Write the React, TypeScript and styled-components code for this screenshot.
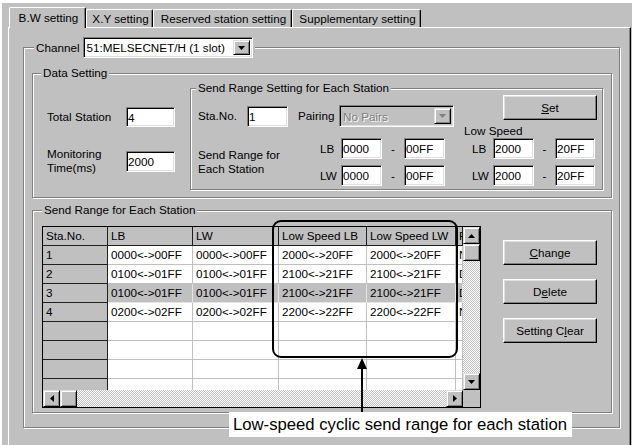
import styled, { createGlobalStyle } from 'styled-components';

const FACE = '#c0c0c0';
const SHADOW = '#808080';
const LIGHT = '#dfdfdf';

const GlobalStyle = createGlobalStyle`
  * { box-sizing: border-box; }
  html, body { margin: 0; padding: 0; background: #fff; }
  body {
    font-family: "Liberation Sans", Arial, sans-serif;
    font-size: 11.7px;
    color: #000;
  }
`;

const Dialog = styled.div`
  position: relative;
  width: 630px;
  height: 442px;
  margin: 3px 0 0 2px;
  padding-top: 4px;
  background: ${FACE};
  overflow: hidden;
  display: flex;
  flex-direction: column;
`;

const TabStrip = styled.div`
  display: flex;
  align-items: flex-end;
  height: 20px;
  margin-left: 7px;
`;

const Tab = styled.div<{ $w: number; $active?: boolean }>`
  position: relative;
  z-index: ${p => (p.$active ? 1 : 0)};
  width: ${p => p.$w}px;
  height: ${p => (p.$active ? 21 : 18)}px;
  margin-bottom: ${p => (p.$active ? -1 : 0)}px;
  padding: 0 0 ${p => (p.$active ? 2 : 0)}px 2px;
  display: flex;
  align-items: center;
  justify-content: center;
  white-space: nowrap;
  background: ${FACE};
  border-top: 1px solid #fff;
  border-left: 1px solid #fff;
  border-right: 1px solid #000;
  border-radius: 2px 2px 0 0;
  box-shadow: inset -1px 0 0 ${SHADOW};
`;

const Panel = styled.div`
  flex: 1;
  width: 623px;
  margin-left: 6px;
  padding: 9px 0 0 14px;
  border-top: 1px solid #fff;
  border-left: 1px solid #fff;
  border-right: 1px solid #000;
  box-shadow: inset -1px 0 0 ${SHADOW};
`;

const Group = styled.fieldset<{ $w: number; $mt?: number }>`
  width: ${p => p.$w}px;
  min-width: 0;
  margin: ${p => p.$mt ?? 0}px 0 0 0;
  padding: 0;
  border: 1px solid ${SHADOW};
  box-shadow: inset 1px 1px 0 #fff, 1px 1px 0 #fff;
`;

const Legend = styled.legend<{ $ml: number }>`
  margin-left: ${p => p.$ml}px;
  padding: 0 2px;
  background: ${FACE};
  line-height: 14px;
  white-space: nowrap;
`;

const LegendRow = styled.span`
  display: flex;
  align-items: center;
  gap: 3px;
`;

const ChannelBody = styled.div`
  padding: 8px 0 14px 8px;
`;

const DataBody = styled.div`
  display: flex;
  align-items: flex-start;
  padding-bottom: 7px;
`;

const StationCol = styled.div`
  width: 157px;
  flex-shrink: 0;
  padding: 27px 0 0 14px;
`;

const SubBody = styled.div`
  display: flex;
  align-items: flex-start;
  padding: 0 0 3px 7px;
`;

const RangeCol = styled.div`
  width: 256px;
  padding-top: 10px;
`;

const LowSpeedCol = styled.div`
  width: 132px;
  margin-left: 10px;
  display: flex;
  flex-direction: column;
`;

const FieldRow = styled.div<{ $mt?: number }>`
  display: flex;
  align-items: center;
  margin-top: ${p => p.$mt ?? 0}px;
`;

const RangePairs = styled.div`
  display: flex;
  flex-direction: column;
  gap: 6px;
`;

const Label = styled.span<{ $w: number; $ml?: number; $pl?: number }>`
  display: block;
  flex-shrink: 0;
  width: ${p => p.$w}px;
  margin-left: ${p => p.$ml ?? 0}px;
  padding-left: ${p => p.$pl ?? 0}px;
  line-height: 14px;
  white-space: nowrap;
`;

const SmallCaption = styled.span`
  margin-top: 4px;
  height: 14px;
  line-height: 14px;
`;

const Dash = styled.span<{ $w: number }>`
  width: ${p => p.$w}px;
  text-align: center;
`;

const TextBox = styled.input<{ $w: number; $h: number }>`
  width: ${p => p.$w}px;
  height: ${p => p.$h}px;
  flex-shrink: 0;
  margin: 0;
  padding: 0 0 0 1px;
  font: inherit;
  color: #000;
  background: #fff;
  outline: none;
  border: 1px solid;
  border-color: ${SHADOW} #fff #fff ${SHADOW};
  box-shadow: inset 1px 1px 0 #000, inset -1px -1px 0 ${LIGHT};
`;

const Combo = styled.div<{ $w: number; $h: number; $disabled?: boolean }>`
  width: ${p => p.$w}px;
  height: ${p => p.$h}px;
  flex-shrink: 0;
  padding: 2px;
  display: flex;
  align-items: stretch;
  background: ${p => (p.$disabled ? FACE : '#fff')};
  color: ${p => (p.$disabled ? SHADOW : '#000')};
  text-shadow: ${p => (p.$disabled ? '1px 1px 0 #fff' : 'none')};
  border: 1px solid;
  border-color: ${SHADOW} #fff #fff ${SHADOW};
  box-shadow: inset 1px 1px 0 #000, inset -1px -1px 0 ${LIGHT};
`;

const ComboText = styled.span`
  flex: 1;
  display: flex;
  align-items: center;
  padding-left: 1px;
  overflow: hidden;
  white-space: nowrap;
`;

const Raised = styled.span<{ $w?: number; $h?: number }>`
  width: ${p => (p.$w ? `${p.$w}px` : 'auto')};
  height: ${p => (p.$h ? `${p.$h}px` : 'auto')};
  flex-shrink: 0;
  display: flex;
  align-items: center;
  justify-content: center;
  background: ${FACE};
  border: 1px solid;
  border-color: ${LIGHT} #000 #000 ${LIGHT};
  box-shadow: inset 1px 1px 0 #fff, inset -1px -1px 0 ${SHADOW};
`;

const Button = styled.button<{ $ml?: number }>`
  width: 94px;
  height: 25px;
  margin: 0 0 0 ${p => p.$ml ?? 0}px;
  padding: 0;
  font: inherit;
  color: #000;
  background: ${FACE};
  border: 1px solid;
  border-color: #fff #000 #000 #fff;
  box-shadow: inset -1px -1px 0 ${SHADOW}, inset 1px 1px 0 ${LIGHT};
`;

const ListBody = styled.div`
  display: flex;
  align-items: flex-start;
  padding: 9px 0 4px 9px;
`;

const ButtonCol = styled.div`
  margin-left: 22px;
  padding-top: 14px;
  display: flex;
  flex-direction: column;
  gap: 14px;
`;

const TableFrame = styled.div`
  width: 439px;
  height: 182px;
  border: 1px solid #000;
  display: grid;
  grid-template-columns: 420px 17px;
  grid-template-rows: 163px 17px;
  background: ${FACE};
`;

const Cells = styled.div`
  display: grid;
  grid-template-columns: 65px 85px 86px 88px 89px 7px;
  grid-auto-rows: 19px;
  overflow: hidden;
  background: #fff;
`;

type CellKind = 'head' | 'fixed' | 'data' | 'sel';

const Cell = styled.div<{ $kind: CellKind }>`
  padding-left: 3px;
  line-height: 18px;
  white-space: nowrap;
  overflow: hidden;
  background: ${p => (p.$kind === 'data' ? '#fff' : FACE)};
  border-right: 1px solid ${p => (p.$kind === 'head' || p.$kind === 'fixed' ? '#202020' : p.$kind === 'sel' ? '#e4e4e4' : FACE)};
  border-bottom: 1px solid ${p => (p.$kind === 'head' || p.$kind === 'fixed' ? '#202020' : p.$kind === 'sel' ? '#e4e4e4' : FACE)};
`;

const ScrollV = styled.div`
  display: flex;
  flex-direction: column;
`;

const ScrollH = styled.div`
  display: flex;
`;

const Track = styled.div`
  flex: 1;
  background: repeating-conic-gradient(#fff 0 25%, ${FACE} 0 50%) 0 0 / 2px 2px;
`;

const Corner = styled.div`
  background: ${FACE};
`;

const Highlight = styled.div`
  position: absolute;
  left: 270px;
  top: 217px;
  width: 186px;
  height: 138px;
  border: 2px solid #000;
  border-radius: 9px;
`;

const Pointer = styled.svg`
  position: absolute;
  left: 355px;
  top: 355px;
`;

const Callout = styled.div`
  position: absolute;
  left: 227px;
  top: 409px;
  width: 343px;
  height: 25px;
  padding-left: 4px;
  background: #fff;
  font-family: "Liberation Sans", Arial, sans-serif;
  font-size: 16.7px;
  line-height: 25px;
  white-space: nowrap;
`;

type Dir = 'up' | 'down' | 'left' | 'right';

const Arrow = ({ dir, color = '#000' }: { dir: Dir; color?: string }) => {
  const pts: Record<Dir, string> = {
    up: '0,4 7,4 3.5,0',
    down: '0,0 7,0 3.5,4',
    left: '4,0 4,7 0,3.5',
    right: '0,0 0,7 4,3.5',
  };
  const vertical = dir === 'up' || dir === 'down';
  return (
    <svg width={vertical ? 7 : 4} height={vertical ? 4 : 7}>
      <polygon points={pts[dir]} fill={color} />
    </svg>
  );
};

const rows: string[][] = [
  ['1', '0000<->00FF', '0000<->00FF', '2000<->20FF', '2000<->20FF', 'No Pairs'],
  ['2', '0100<->01FF', '0100<->01FF', '2100<->21FF', '2100<->21FF', 'Do Pairs'],
  ['3', '0100<->01FF', '0100<->01FF', '2100<->21FF', '2100<->21FF', 'Do Pairs'],
  ['4', '0200<->02FF', '0200<->02FF', '2200<->22FF', '2200<->22FF', 'No Pairs'],
  ['', '', '', '', '', ''],
  ['', '', '', '', '', ''],
  ['', '', '', '', '', ''],
  ['', '', '', '', '', ''],
];

const headers = ['Sta.No.', 'LB', 'LW', 'Low Speed LB', 'Low Speed LW', 'Pairing'];

const RangeRow = ({ name, from, to, labelW, labelPl, dashW, lastW }: {
  name: string; from: string; to: string; labelW: number; labelPl?: number; dashW: number; lastW: number;
}) => (
  <FieldRow>
    <Label $w={labelW} $pl={labelPl}>{name}</Label>
    <TextBox $w={41} $h={21} readOnly value={from} />
    <Dash $w={dashW}>-</Dash>
    <TextBox $w={lastW} $h={21} readOnly value={to} />
  </FieldRow>
);

export default function App() {
  return (
    <>
      <GlobalStyle />
      <Dialog>
        <TabStrip>
          <Tab $w={77} $active>B.W setting</Tab>
          <Tab $w={67}>X.Y setting</Tab>
          <Tab $w={139}>Reserved station setting</Tab>
          <Tab $w={129}>Supplementary setting</Tab>
        </TabStrip>
        <Panel>
          <Group $w={597}>
            <Legend $ml={10}>
              <LegendRow>
                Channel
                <Combo $w={170} $h={21}>
                  <ComboText>51:MELSECNET/H (1 slot)</ComboText>
                  <Raised $w={17}><Arrow dir="down" /></Raised>
                </Combo>
              </LegendRow>
            </Legend>
            <ChannelBody>
              <Group $w={580}>
                <Legend $ml={8}>Data Setting</Legend>
                <DataBody>
                  <StationCol>
                    <FieldRow>
                      <Label $w={79}>Total Station</Label>
                      <TextBox $w={49} $h={20} readOnly value="4" />
                    </FieldRow>
                    <FieldRow $mt={20}>
                      <Label $w={79}>Monitoring<br />Time(ms)</Label>
                      <TextBox $w={49} $h={21} readOnly value="2000" />
                    </FieldRow>
                  </StationCol>
                  <Group $w={413} $mt={1}>
                    <Legend $ml={5}>Send Range Setting for Each Station</Legend>
                    <SubBody>
                      <RangeCol>
                        <FieldRow>
                          <Label $w={49}>Sta.No.</Label>
                          <TextBox $w={41} $h={21} readOnly value="1" />
                          <Label $w={41} $ml={10}>Pairing</Label>
                          <Combo $w={115} $h={22} $disabled>
                            <ComboText>No Pairs</ComboText>
                            <Raised $w={17}><Arrow dir="down" color={SHADOW} /></Raised>
                          </Combo>
                        </FieldRow>
                        <FieldRow $mt={11}>
                          <Label $w={122}>Send Range for<br />Each Station</Label>
                          <RangePairs>
                            <RangeRow name="LB" from="0000" to="00FF" labelW={21} dashW={22} lastW={41} />
                            <RangeRow name="LW" from="0000" to="00FF" labelW={21} dashW={22} lastW={41} />
                          </RangePairs>
                        </FieldRow>
                      </RangeCol>
                      <LowSpeedCol>
                        <Button $ml={39}><u>S</u>et</Button>
                        <SmallCaption>Low Speed</SmallCaption>
                        <RangePairs>
                          <RangeRow name="LB" from="2000" to="20FF" labelW={29} labelPl={8} dashW={21} lastW={40} />
                          <RangeRow name="LW" from="2000" to="20FF" labelW={29} labelPl={8} dashW={21} lastW={40} />
                        </RangePairs>
                      </LowSpeedCol>
                    </SubBody>
                  </Group>
                </DataBody>
              </Group>
              <Group $w={580} $mt={5}>
                <Legend $ml={9}>Send Range for Each Station</Legend>
                <ListBody>
                  <TableFrame>
                    <Cells>
                      {headers.map(h => (
                        <Cell key={h} $kind="head">{h}</Cell>
                      ))}
                      {rows.map((r, i) =>
                        r.map((v, j) => (
                          <Cell key={`${i}-${j}`} $kind={j === 0 ? 'fixed' : i === 2 ? 'sel' : 'data'}>{v}</Cell>
                        ))
                      )}
                    </Cells>
                    <ScrollV>
                      <Raised $h={17}><Arrow dir="up" /></Raised>
                      <Raised $h={17} />
                      <Track />
                      <Raised $h={17}><Arrow dir="down" /></Raised>
                    </ScrollV>
                    <ScrollH>
                      <Raised $w={17}><Arrow dir="left" /></Raised>
                      <Raised $w={17} />
                      <Track />
                      <Raised $w={17}><Arrow dir="right" /></Raised>
                    </ScrollH>
                    <Corner />
                  </TableFrame>
                  <ButtonCol>
                    <Button><u>C</u>hange</Button>
                    <Button>D<u>e</u>lete</Button>
                    <Button>Setting C<u>l</u>ear</Button>
                  </ButtonCol>
                </ListBody>
              </Group>
            </ChannelBody>
          </Group>
        </Panel>
        <Highlight />
        <Pointer width={10} height={54}>
          <polygon points="5,0 0,11 10,11" fill="#000" />
          <rect x={4} y={10} width={2} height={44} fill="#000" />
        </Pointer>
        <Callout>Low-speed cyclic send range for each station</Callout>
      </Dialog>
    </>
  );
}
